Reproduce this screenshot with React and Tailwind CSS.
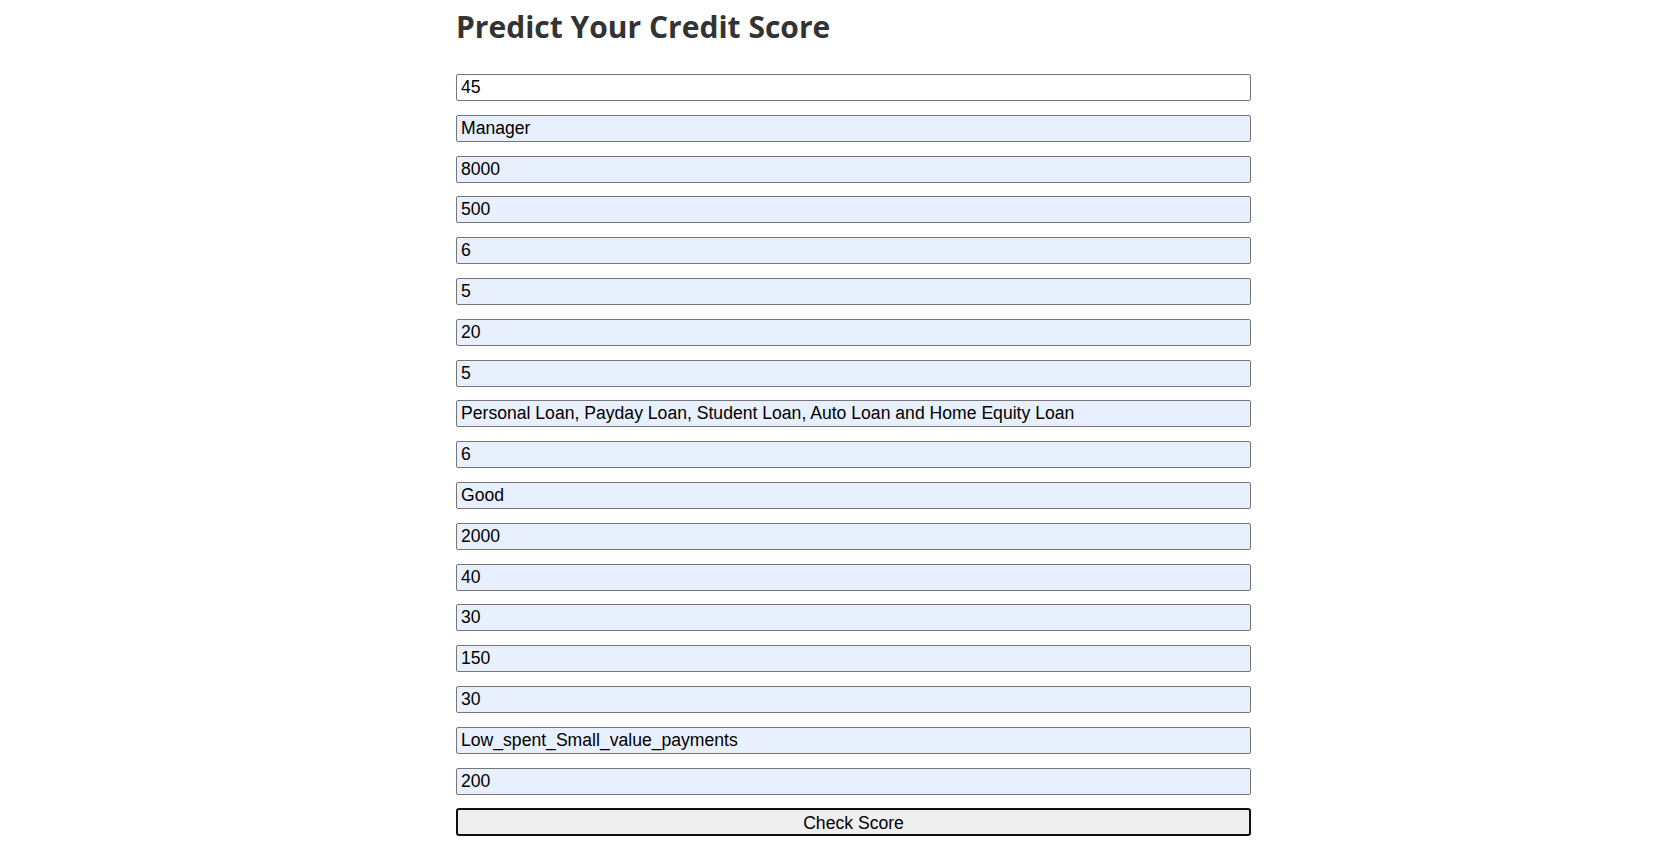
const fields = [
  { value: '45', filled: false },
  { value: 'Manager', filled: true },
  { value: '8000', filled: true },
  { value: '500', filled: true },
  { value: '6', filled: true },
  { value: '5', filled: true },
  { value: '20', filled: true },
  { value: '5', filled: true },
  { value: 'Personal Loan, Payday Loan, Student Loan, Auto Loan and Home Equity Loan', filled: true },
  { value: '6', filled: true },
  { value: 'Good', filled: true },
  { value: '2000', filled: true },
  { value: '40', filled: true },
  { value: '30', filled: true },
  { value: '150', filled: true },
  { value: '30', filled: true },
  { value: 'Low_spent_Small_value_payments', filled: true },
  { value: '200', filled: true },
]

export default function App() {
  return (
    <div className="min-h-screen bg-white">
      <div className="ml-[456px] w-[795px] pt-[8px]">
        <h1
          className="text-[30px] leading-[38px] font-bold text-[#333333] mb-[28px]"
          style={{ fontFamily: '"Open Sans", sans-serif' }}
        >
          Predict Your Credit Score
        </h1>

        <form
          className="flex flex-col gap-[13.8px]"
          style={{ fontFamily: '"Liberation Sans", Arial, sans-serif' }}
        >
          {fields.map((f, i) => (
            <input
              key={i}
              type="text"
              defaultValue={f.value}
              className={`block w-full h-[27px] px-[4px] text-[17.6px] text-black border border-[#767676] rounded-[2px] outline-none ${
                f.filled ? 'bg-[#e8f0fe]' : 'bg-white'
              }`}
            />
          ))}
          <button
            type="button"
            className="block w-full h-[28px] text-[17.6px] text-black bg-[#efefef] border-2 border-[#111111] rounded-[3px]"
          >
            Check Score
          </button>
        </form>
      </div>
    </div>
  )
}
